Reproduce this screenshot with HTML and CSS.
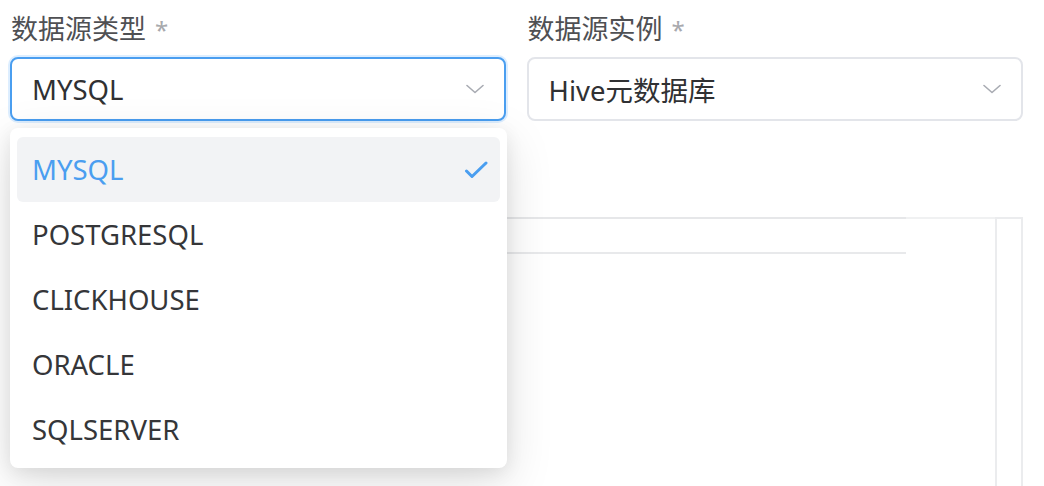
FILE: index.html
```html
<!DOCTYPE html>
<html lang="zh-CN">
<head>
<meta charset="utf-8">
<title>数据源选择</title>
<link rel="stylesheet" href="styles.css">
</head>
<body>
<div class="page">
  <div class="form-row">
    <div class="field">
      <label class="label">数据源类型<span class="req">*</span></label>
      <div class="select is-focus">
        <span class="value">MYSQL</span>
        <svg class="chev" viewBox="0 0 18 10" width="18" height="10"><path d="M1 1.5 L9 8.5 L17 1.5"/></svg>
      </div>
      <div class="dropdown">
        <ul class="options">
          <li class="option selected"><span>MYSQL</span><svg class="check" viewBox="0 0 24 18" width="24" height="18"><path d="M2.5 10 L8 15.5 L22 2"/></svg></li>
          <li class="option"><span>POSTGRESQL</span></li>
          <li class="option"><span>CLICKHOUSE</span></li>
          <li class="option"><span>ORACLE</span></li>
          <li class="option"><span>SQLSERVER</span></li>
        </ul>
      </div>
    </div>
    <div class="field">
      <label class="label">数据源实例<span class="req">*</span></label>
      <div class="select">
        <span class="value">Hive元数据库</span>
        <svg class="chev" viewBox="0 0 18 10" width="18" height="10"><path d="M1 1.5 L9 8.5 L17 1.5"/></svg>
      </div>
    </div>
  </div>
  <div class="editor">
    <div class="grid"><div class="thead"></div></div>
    <div class="gap"></div>
    <div class="vscroll"></div>
  </div>
</div>
</body>
</html>
```

FILE: styles.css
```css
html, body {
  margin: 0;
  background: #ffffff;
}

body {
  font-family: "Noto Sans", "Noto Sans CJK SC", sans-serif;
  overflow: hidden;
}

.page {
  padding: 9px 0 0 10px;
  width: 1013px;
}

.form-row {
  display: flex;
  gap: 21px;
}

.field {
  position: relative;
  width: 496px;
}

.field + .field {
  width: 497px;
}

.label {
  display: block;
  font-size: 27px;
  line-height: 40px;
  height: 40px;
  color: #4f5053;
  padding-left: 1px;
  margin-bottom: 8px;
  white-space: nowrap;
}

.req {
  color: #a8a9ad;
  font-size: 24px;
  margin-left: 9px;
}

.select {
  box-sizing: border-box;
  height: 64px;
  border: 2px solid #e3e5ea;
  border-radius: 8px;
  display: flex;
  align-items: center;
  justify-content: space-between;
  padding: 0 20px 0 20px;
  font-size: 27.5px;
  color: #303133;
  background: #fff;
}

.select.is-focus {
  border-color: #4a9ef0;
  box-shadow: 0 0 0 2px rgba(64, 158, 255, 0.18);
}

.chev {
  fill: none;
  stroke: #a8abb2;
  stroke-width: 1.6;
  stroke-linecap: round;
  stroke-linejoin: round;
}

.dropdown {
  position: absolute;
  left: 0;
  top: 119px;
  width: 497px;
  box-sizing: border-box;
  background: #fff;
  border-radius: 8px;
  padding: 9px 7px 6px;
  box-shadow: 0 14px 48px rgba(0, 0, 0, 0.13), 0 4px 18px rgba(0, 0, 0, 0.08);
  z-index: 10;
}

.options {
  list-style: none;
  margin: 0;
  padding: 0;
}

.option {
  height: 65px;
  display: flex;
  align-items: center;
  justify-content: space-between;
  padding: 0 12px 0 15px;
  font-size: 27.5px;
  color: #353639;
  border-radius: 6px;
}

.option.selected {
  background: #f2f3f5;
  color: #4a9ef0;
}

.check {
  fill: none;
  stroke: #4a9ef0;
  stroke-width: 3;
  stroke-linecap: round;
  stroke-linejoin: round;
}

.editor {
  margin-top: 96px;
  height: 280px;
  display: flex;
}

.grid {
  width: 896px;
  border-top: 2px solid #e6e7e9;
}

.thead {
  height: 33px;
  border-bottom: 2px solid #e8e9eb;
}

.gap {
  flex: 1;
  border-top: 2px solid #f0f1f2;
}

.vscroll {
  box-sizing: border-box;
  width: 28px;
  border: 2px solid #ebecee;
  border-bottom: none;
}
```
